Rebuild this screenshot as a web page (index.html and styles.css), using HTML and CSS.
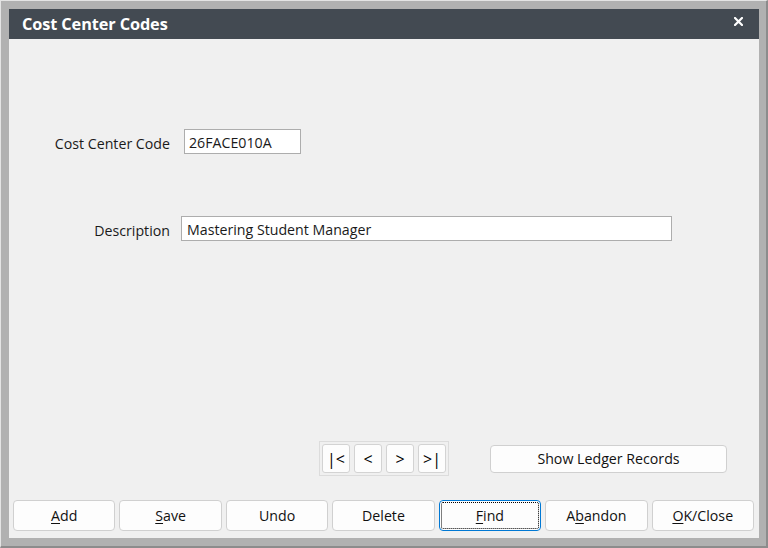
FILE: index.html
```html
<!DOCTYPE html>
<html>
<head>
<meta charset="utf-8">
<title>Cost Center Codes</title>
<link rel="stylesheet" href="styles.css">
</head>
<body>
<div class="frame">
  <div class="dialog">
    <div class="titlebar">
      <span class="title">Cost Center Codes</span>
      <svg class="close" width="9" height="9" viewBox="0 0 9 9"><path d="M1 1 L8 8 M8 1 L1 8" stroke="#fff" stroke-width="2.2" stroke-linecap="square"/></svg>
    </div>
    <div class="content">
      <div class="form-row row-code">
        <label class="label">Cost Center Code</label>
        <div class="field field-code">26FACE010A</div>
      </div>
      <div class="form-row row-desc">
        <label class="label">Description</label>
        <div class="field field-desc">Mastering Student Manager</div>
      </div>
      <div class="spacer"></div>
      <div class="nav-row">
        <div class="nav-group">
          <button class="nav-btn">|&lt;</button>
          <button class="nav-btn">&lt;</button>
          <button class="nav-btn">&gt;</button>
          <button class="nav-btn">&gt;|</button>
        </div>
        <button class="btn ledger">Show Ledger Records</button>
      </div>
      <div class="actions">
        <button class="btn action"><u>A</u>dd</button>
        <button class="btn action"><u>S</u>ave</button>
        <button class="btn action">Undo</button>
        <button class="btn action">Delete</button>
        <button class="btn action focused"><u>F</u>ind</button>
        <button class="btn action">A<u>b</u>andon</button>
        <button class="btn action"><u>O</u>K/Close</button>
      </div>
    </div>
  </div>
</div>
</body>
</html>
```
FILE: styles.css
```css
html, body {
  margin: 0;
  padding: 0;
  width: 768px;
  height: 548px;
  background: #b1b1b1;
  overflow: hidden;
}
.frame {
  box-sizing: border-box;
  width: 768px;
  height: 548px;
  border-top: 1px solid #e4e4e4;
  border-left: 1px solid #e4e4e4;
  border-right: 2px solid #8c8c8c;
  border-bottom: 2px solid #8c8c8c;
  padding: 8px 7px 8px 8px;
  font-family: "Open Sans", "Noto Sans", sans-serif;
}
.dialog {
  display: flex;
  flex-direction: column;
  height: 100%;
  background: #f0f0f0;
}
.titlebar {
  flex: none;
  height: 30px;
  background: #434a52;
  display: flex;
  align-items: center;
  justify-content: space-between;
  padding: 0 16px 0 13px;
}
.title {
  color: #fff;
  font-weight: 700;
  font-size: 16.3px;
  letter-spacing: -0.1px;
}
.close {
  margin-top: -6px;
}
.content {
  flex: 1;
  display: flex;
  flex-direction: column;
  padding: 0 5px 7px 4px;
}
.form-row {
  display: flex;
  align-items: center;
  font-size: 14.2px;
  color: #1a1a1a;
}
.row-code {
  margin-top: 90px;
}
.row-desc {
  margin-top: 62px;
}
.label {
  width: 157px;
  text-align: right;
  padding-top: 3px;
}
.field {
  box-sizing: border-box;
  height: 25px;
  background: #fff;
  border: 1px solid #adadad;
  padding: 3px 0 0 4px;
  overflow: hidden;
  white-space: nowrap;
  line-height: 19px;
}
.field-code {
  width: 117px;
  margin-left: 14px;
}
.field-desc {
  width: 491px;
  margin-left: 11px;
  padding-left: 5px;
}
.spacer {
  flex: 1;
}
.nav-row {
  display: flex;
  align-items: center;
  padding-left: 306px;
}
.nav-group {
  display: flex;
  gap: 4px;
  padding: 2px;
  border: 1px solid #dcdcdc;
}
.nav-btn {
  box-sizing: border-box;
  width: 28px;
  height: 29px;
  padding: 0;
  background: #fdfdfd;
  border: 1px solid #d3d3d3;
  border-radius: 3px;
  font-family: "Open Sans", sans-serif;
  font-size: 16px;
  color: #000;
}
.btn {
  box-sizing: border-box;
  background: #fdfdfd;
  border: 1px solid #d0d0d0;
  border-radius: 4px;
  font-family: "Open Sans", "Noto Sans", sans-serif;
  font-size: 14.2px;
  color: #111;
  padding: 0;
}
.ledger {
  width: 237px;
  height: 28px;
  margin-left: 41px;
}
.actions {
  display: flex;
  gap: 4px;
  margin-top: 24px;
}
.action {
  flex: 1;
  height: 31px;
}
.action u {
  text-underline-offset: 2px;
}
.focused {
  border-color: #0078d4;
  outline: 1px dotted #000;
  outline-offset: -3px;
}
```
